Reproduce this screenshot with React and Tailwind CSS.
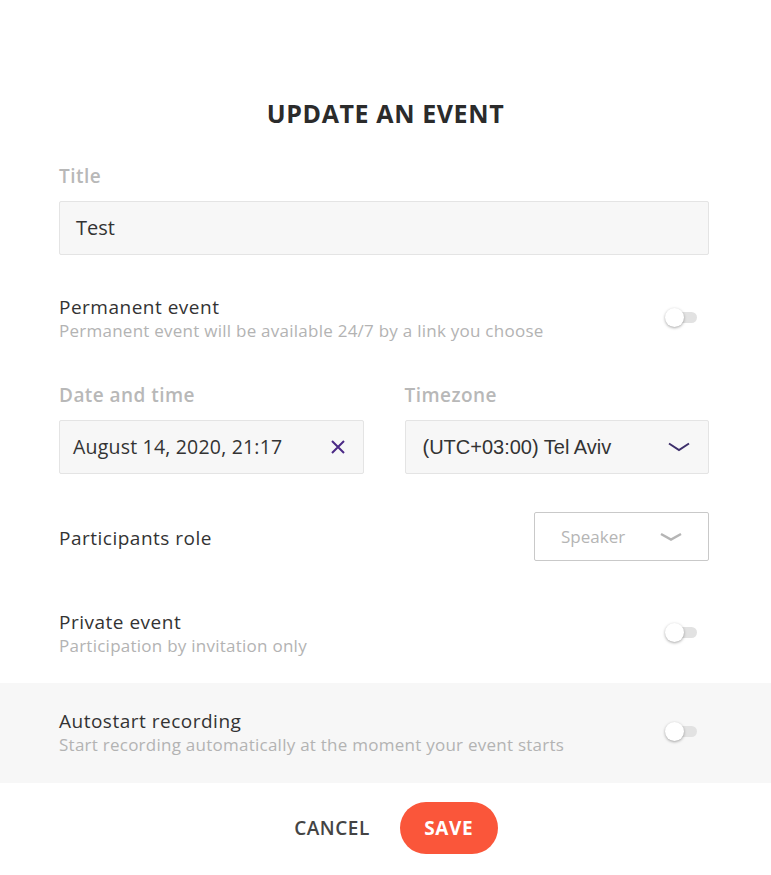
import React from "react";

const sans = { fontFamily: '"Open Sans", "Liberation Sans", sans-serif' };

function Toggle() {
    return (
        <div className="relative w-[32px] h-[19px] shrink-0">
            <div className="absolute left-[4px] top-[4px] w-[28px] h-[11px] rounded-full bg-[#e2e2e2]" />
            <div className="absolute left-0 top-0 w-[19px] h-[19px] rounded-full bg-white shadow-[0_1px_3px_rgba(0,0,0,0.35)]" />
        </div>
    );
}

function SwitchRow({ title, hint }) {
    return (
        <div className="flex items-center justify-between">
            <div>
                <div className="text-[19px] leading-[24px] text-[#333] tracking-[0.5px]">{title}</div>
                <div className="text-[17px] leading-[24px] text-[#b3b3b3] tracking-[0.25px]">{hint}</div>
            </div>
            <div className="mr-[12px] -mt-[3px]">
                <Toggle />
            </div>
        </div>
    );
}

export default function App() {
    return (
        <div className="min-h-screen bg-white pt-[97px]" style={sans}>
            <h1 className="text-center text-[25px] leading-[32px] font-bold text-[#2b2b2b] tracking-[0.6px]">
                UPDATE AN EVENT
            </h1>

            <div className="pl-[59px] pr-[62px]">
                {/* Title */}
                <div className="mt-[35px] text-[19px] leading-[24px] font-semibold text-[#b8b8b8] tracking-[0.45px]">Title</div>
                <div className="mt-[13px] h-[54px] flex items-center px-[16px] bg-[#f7f7f7] border border-[#e4e4e4] rounded-[2px] text-[20px] text-[#333]">
                    Test
                </div>

                {/* Permanent */}
                <div className="mt-[40px]">
                    <SwitchRow
                        title="Permanent event"
                        hint="Permanent event will be available 24/7 by a link you choose"
                    />
                </div>

                {/* Date and timezone */}
                <div className="mt-[40px] grid grid-cols-2 gap-[41px]">
                    <div>
                        <div className="text-[19px] leading-[24px] font-semibold text-[#b8b8b8] tracking-[0.45px]">Date and time</div>
                        <div className="mt-[13px] h-[54px] flex items-center justify-between pl-[13px] pr-[16px] bg-[#f7f7f7] border border-[#e4e4e4] rounded-[2px]">
                            <span className="text-[19.5px] text-[#333] tracking-[0.2px]">August 14, 2020, 21:17</span>
                            <svg width="16" height="16" viewBox="0 0 16 16" className="mr-[1px]">
                                <path d="M2 2 L14 14 M14 2 L2 14" stroke="#4b2a86" strokeWidth="2" fill="none" />
                            </svg>
                        </div>
                    </div>
                    <div>
                        <div className="text-[19px] leading-[24px] font-semibold text-[#b8b8b8] tracking-[0.45px]">Timezone</div>
                        <div className="mt-[13px] h-[54px] flex items-center justify-between pl-[17px] pr-[18px] bg-[#f7f7f7] border border-[#e4e4e4] rounded-[2px]">
                            <span
                                className="text-[20px] text-[#333]"
                                style={{ fontFamily: '"Liberation Sans", Arial, sans-serif' }}
                            >
                                (UTC+03:00) Tel Aviv
                            </span>
                            <svg width="22" height="10" viewBox="0 0 22 10">
                                <path d="M1 1.5 L11 8 L21 1.5" stroke="#3d2f6b" strokeWidth="2" fill="none" />
                            </svg>
                        </div>
                    </div>
                </div>

                {/* Participants role */}
                <div className="mt-[38px] flex items-center justify-between">
                    <div className="text-[19px] leading-[24px] text-[#333] mt-[3px] tracking-[0.5px]">Participants role</div>
                    <div className="w-[175px] h-[49px] flex items-center justify-between pl-[26px] pr-[26px] border border-[#c9c9c9] rounded-[2px] bg-white">
                        <span className="text-[17px] text-[#b5b5b5]">Speaker</span>
                        <svg width="22" height="10" viewBox="0 0 22 10">
                            <path d="M1 2 L11 7.5 L21 2" stroke="#b5b5b5" strokeWidth="2.5" fill="none" />
                        </svg>
                    </div>
                </div>

                {/* Private */}
                <div className="mt-[49px]">
                    <SwitchRow title="Private event" hint="Participation by invitation only" />
                </div>
            </div>

            {/* Autostart */}
            <div className="mt-[25px] bg-[#f7f7f7] pl-[59px] pr-[62px] pt-[26px] pb-[26px]">
                <SwitchRow
                    title="Autostart recording"
                    hint="Start recording automatically at the moment your event starts"
                />
            </div>

            {/* Buttons */}
            <div className="mt-[19px] flex items-center justify-center gap-[30px] pl-[21px]">
                <button className="text-[19px] font-semibold text-[#444] tracking-[0.5px]">CANCEL</button>
                <button className="h-[52px] w-[98px] rounded-full bg-[#fa563a] text-white text-[19px] font-bold tracking-[0.6px]">
                    SAVE
                </button>
            </div>
        </div>
    );
}
